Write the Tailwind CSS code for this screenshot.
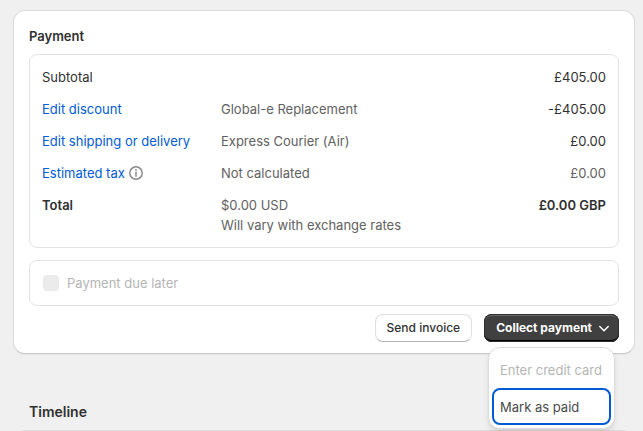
<!DOCTYPE html>
<html lang="en">
<head>
  <meta charset="UTF-8" />
  <meta name="viewport" content="width=device-width, initial-scale=1.0" />
  <title>Draft order payment</title>
  <script src="https://cdn.jsdelivr.net/npm/@tailwindcss/browser@4"></script>
</head>
<body class="bg-[#f0f0f0] text-[#303030] font-[Inter,sans-serif] text-[13px] leading-5 h-screen overflow-hidden">
  <main class="pt-[10px] pl-[13px] pr-2">

    <!-- Payment card -->
    <section class="bg-white border border-[#dcdcdc] border-b-[#c8c8c8] rounded-xl shadow-xs px-[15px] pt-[15px] pb-[11px]">
      <h2 class="font-semibold mb-2">Payment</h2>

      <div class="border border-[#e3e3e3] rounded-lg p-3">
        <table class="w-full text-left">
          <tbody>
            <tr class="align-top">
              <th class="w-[179px] font-normal pb-3">Subtotal</th>
              <td></td>
              <td class="text-right">£405.00</td>
            </tr>
            <tr class="align-top">
              <th class="font-normal pb-3"><a href="#" class="text-[#005bd3]">Edit discount</a></th>
              <td class="text-[#616161]">Global-e Replacement</td>
              <td class="text-right">-£405.00</td>
            </tr>
            <tr class="align-top">
              <th class="font-normal pb-3"><a href="#" class="text-[#005bd3]">Edit shipping or delivery</a></th>
              <td class="text-[#616161]">Express Courier (Air)</td>
              <td class="text-right">£0.00</td>
            </tr>
            <tr class="align-top">
              <th class="font-normal pb-3">
                <div class="flex items-center gap-1">
                  <a href="#" class="text-[#005bd3]">Estimated tax</a>
                  <svg class="size-[14px] text-[#8a8a8a]" viewBox="0 0 14 14" fill="none" stroke="currentColor" stroke-width="1.5">
                    <circle cx="7" cy="7" r="6.2" />
                    <path d="M7 6.2V10.3" stroke-linecap="round" />
                    <circle cx="7" cy="3.9" r="0.9" fill="currentColor" stroke="none" />
                  </svg>
                </div>
              </th>
              <td class="text-[#616161]">Not calculated</td>
              <td class="text-right text-[#616161]">£0.00</td>
            </tr>
            <tr class="align-top">
              <th class="font-semibold">Total</th>
              <td class="text-[#616161]">$0.00 USD<br />Will vary with exchange rates</td>
              <td class="text-right font-semibold">£0.00 GBP</td>
            </tr>
          </tbody>
        </table>
      </div>

      <div class="mt-3 border border-[#e3e3e3] rounded-lg p-3">
        <label for="due-later" class="flex items-center gap-2 text-[#b5b5b5]">
          <input id="due-later" type="checkbox" disabled class="appearance-none size-4 ml-px rounded bg-[#ebebeb]" />
          Payment due later
        </label>
      </div>

      <div class="mt-2 flex justify-end gap-3">
        <button class="h-7 px-[11px] rounded-lg border border-[#dedede] border-b-[#b5b5b5] bg-white text-xs font-medium">Send invoice</button>

        <div class="relative">
          <button class="h-7 pl-3 pr-[7px] flex items-center gap-1 rounded-lg bg-[#404040] text-white text-xs font-bold inset-ring inset-ring-[#303030] shadow-[inset_0_-2px_0_#000,inset_0_2px_0_#666]">
            Collect payment
            <svg class="size-4" viewBox="0 0 16 16" fill="none" stroke="currentColor" stroke-width="1.5" stroke-linecap="round" stroke-linejoin="round">
              <path d="M3.8 6.5L8 10.7L12.2 6.5" />
            </svg>
          </button>

          <!-- Collect payment menu -->
          <div class="absolute z-10 top-[33px] right-1 w-[127px] p-[3px] bg-white border border-[#dcdcdc] rounded-xl shadow-md">
            <button disabled class="block w-full h-[37px] px-2 text-left text-[#b5b5b5] whitespace-nowrap">Enter credit card</button>
            <button class="block w-full h-[37px] px-[6px] text-left text-[#4a4a4a] border-2 border-[#005bd3] rounded-lg">Mark as paid</button>
          </div>
        </div>
      </div>
    </section>

    <!-- Timeline -->
    <section class="mt-12">
      <h2 class="px-4 text-sm leading-5 font-semibold">Timeline</h2>
      <div class="mt-2 h-12 bg-white border border-[#dcdcdc] rounded-xl"></div>
    </section>
  </main>
</body>
</html>
